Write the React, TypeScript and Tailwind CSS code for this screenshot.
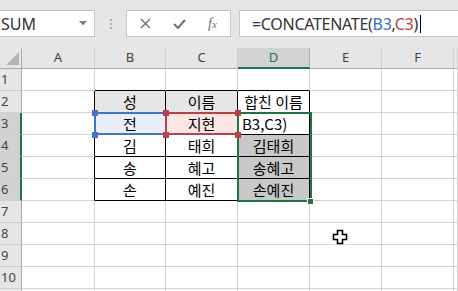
import React from 'react';

const ui = '"Noto Sans", "Liberation Sans", sans-serif';
const kr = '"Noto Sans CJK KR", "Noto Sans", sans-serif';

const cols = ['A', 'B', 'C', 'D', 'E', 'F', ''];

// cell contents, keyed by column letter + row number
const data: Record<string, string> = {
  B2: '성',
  C2: '이름',
  D2: '합친 이름',
  B3: '전',
  C3: '지현',
  D3: 'B3,C3)',
  B4: '김',
  C4: '태희',
  D4: '김태희',
  B5: '송',
  C5: '혜고',
  D5: '송혜고',
  B6: '손',
  C6: '예진',
  D6: '손예진',
};

const inTable = (c: string, r: number) => ['B', 'C', 'D'].includes(c) && r >= 2 && r <= 6;

const cellBg = (c: string, r: number) => {
  if (r === 2 && (c === 'B' || c === 'C')) return 'bg-[#e7e6e6]';
  if (c === 'D' && r >= 4 && r <= 6) return 'bg-[#c8c8c8]';
  if (c === 'B' && r === 3) return 'bg-[#e9eef8]';
  if (c === 'C' && r === 3) return 'bg-[#fbe5e5]';
  return 'bg-white';
};

const Cell = ({ c, r }: { c: string; r: number }) => {
  const black = inTable(c, r);
  const rightBlack = black || (c === 'A' && r >= 2 && r <= 6);
  const bottomBlack = black || (['B', 'C', 'D'].includes(c) && r === 1);
  const text = data[c + r];
  return (
    <div
      className={[
        'border-r border-b flex items-center text-[15px] text-black leading-none overflow-hidden whitespace-nowrap',
        rightBlack ? 'border-r-black' : 'border-r-[#d4d4d4]',
        bottomBlack ? 'border-b-black' : 'border-b-[#d4d4d4]',
        c === 'D' && r === 3 ? 'justify-start pl-[4px]' : 'justify-center',
        cellBg(c, r),
      ].join(' ')}
      style={{ fontFamily: kr }}
    >
      {text}
    </div>
  );
};

const Handle = ({ color, x, y }: { color: string; x: number; y: number }) => (
  <div className={`absolute w-[6px] h-[6px] ${color}`} style={{ left: x, top: y }} />
);

export default function App() {
  const rows = Array.from({ length: 11 }, (_, i) => i + 1);
  return (
    <div className="w-[458px] h-[291px] overflow-hidden bg-white select-none" style={{ fontFamily: ui }}>
      {/* formula bar */}
      <div className="h-[48px] bg-[#e6e6e6] flex items-start pt-[10px]">
        <div className="w-[95px] h-[27px] bg-white border border-l-0 border-[#c6c6c6] flex items-center justify-between pl-[1px] pr-[7px]">
          <span className="text-[16px] text-[#333]">SUM</span>
          <svg width="8" height="5" viewBox="0 0 8 5">
            <path d="M0 0 L8 0 L4 4.5 Z" fill="#808080" />
          </svg>
        </div>
        <div className="w-[31px] h-[27px] flex flex-col items-center justify-center gap-[2px]">
          <div className="w-[2px] h-[2px] bg-[#b0b0b0]" />
          <div className="w-[2px] h-[2px] bg-[#b0b0b0]" />
          <div className="w-[2px] h-[2px] bg-[#b0b0b0]" />
        </div>
        <div className="w-[105px] h-[27px] bg-white border border-[#c6c6c6] flex items-center pl-[13px] gap-[22px]">
          <svg width="11" height="11" viewBox="0 0 11 11">
            <path d="M1 1 L10 10 M10 1 L1 10" stroke="#6e6e6e" strokeWidth="1.4" />
          </svg>
          <svg width="13" height="10" viewBox="0 0 13 10">
            <path d="M1 5 L5 9 L12 1" stroke="#6e6e6e" strokeWidth="2" fill="none" />
          </svg>
          <span className="text-[14px] italic text-[#6e6e6e] leading-none" style={{ fontFamily: '"Liberation Serif", serif' }}>
            f<span className="text-[11px]">x</span>
          </span>
        </div>
        <div className="ml-[8px] flex-1 h-[27px] bg-white border border-r-0 border-[#c6c6c6] flex items-center pl-[12px]">
          <span className="text-[16px] text-[#333] tracking-[-0.3px]">
            =CONCATENATE(<span className="text-[#3a6fc4]">B3</span>,<span className="text-[#b8414a]">C3</span>)
          </span>
          <span className="ml-[2px] w-px h-[18px] bg-black" />
        </div>
      </div>

      {/* sheet */}
      <div className="relative grid grid-cols-[22px_73px_71px_72px_72px_72px_72px_1fr] grid-rows-[21px_repeat(11,22px)]">
        {/* corner */}
        <div className="bg-[#e6e6e6] border-r border-b border-[#ababab] relative">
          <svg className="absolute left-[6px] top-[4px]" width="13" height="13" viewBox="0 0 13 13">
            <path d="M13 0 L13 13 L0 13 Z" fill="#b5b5b5" />
          </svg>
        </div>
        {cols.map((c) => (
          <div
            key={c || 'G'}
            className={[
              'flex items-center justify-center text-[13px] border-r',
              c === 'D'
                ? 'bg-[#d2d2d2] border-b-2 border-b-[#217346] text-[#217346] border-r-[#ababab]'
                : 'bg-[#e6e6e6] border-b border-b-[#ababab] text-[#444] border-r-[#d0d0d0]',
            ].join(' ')}
          >
            {c}
          </div>
        ))}
        {rows.map((r) => (
          <React.Fragment key={r}>
            <div
              className={[
                'flex items-center pl-[1px] text-[13px] text-[#444] border-b border-b-[#d0d0d0]',
                r >= 3 && r <= 6
                  ? 'bg-[#d2d2d2] border-r-2 border-r-[#217346]'
                  : 'bg-[#e6e6e6] border-r border-r-[#ababab]',
              ].join(' ')}
            >
              {r <= 10 ? r : ''}
            </div>
            {cols.map((c) => (
              <Cell key={c + r} c={c || 'G'} r={r} />
            ))}
          </React.Fragment>
        ))}

        {/* range highlights */}
        <div className="absolute left-[94px] top-[64px] w-[73px] h-[23px] border-2 border-[#4472c4]" />
        <div className="absolute left-[165px] top-[64px] w-[74px] h-[23px] border-2 border-[#b8414a]" />
        <div className="absolute left-[237px] top-[64px] w-[75px] h-[90px] border-2 border-[#217346]" />
        <Handle color="bg-[#4472c4]" x={92} y={62} />
        <Handle color="bg-[#4472c4]" x={92} y={84} />
        <Handle color="bg-[#b8414a]" x={163} y={62} />
        <Handle color="bg-[#b8414a]" x={163} y={84} />
        <Handle color="bg-[#b8414a]" x={235} y={62} />
        <Handle color="bg-[#b8414a]" x={235} y={84} />
        <div className="absolute left-[307px] top-[150px] w-[7px] h-[7px] bg-[#217346] border border-white" />

        {/* mouse cursor */}
        <svg className="absolute left-[332px] top-[181px]" width="16" height="16" viewBox="0 0 16 16">
          <path
            d="M5.5 1.5 H10.5 V5.5 H14.5 V10.5 H10.5 V14.5 H5.5 V10.5 H1.5 V5.5 H5.5 Z"
            fill="white"
            stroke="black"
            strokeWidth="1.6"
          />
        </svg>
      </div>
    </div>
  );
}
